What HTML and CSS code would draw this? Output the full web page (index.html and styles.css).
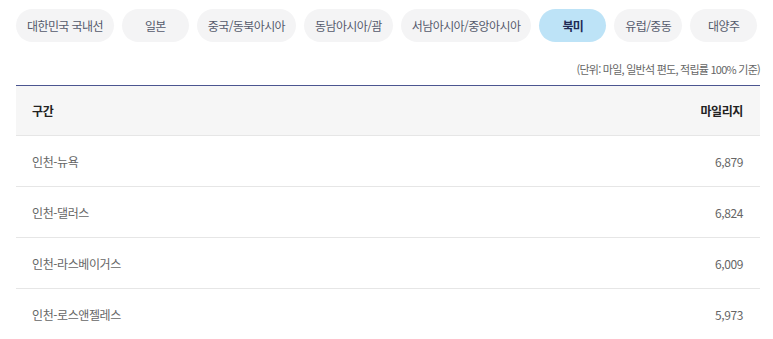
FILE: index.html
```html
<!DOCTYPE html>
<html lang="ko">
<head>
<meta charset="utf-8">
<link rel="stylesheet" href="styles.css">
</head>
<body>
<div class="page">
  <nav class="tabs">
    <button class="tab">대한민국 국내선</button>
    <button class="tab">일본</button>
    <button class="tab">중국/동북아시아</button>
    <button class="tab">동남아시아/괌</button>
    <button class="tab">서남아시아/중앙아시아</button>
    <button class="tab active">북미</button>
    <button class="tab">유럽/중동</button>
    <button class="tab">대양주</button>
  </nav>
  <p class="note">(단위: 마일, 일반석 편도, 적립률 100% 기준)</p>
  <table class="table">
    <thead>
      <tr><th class="left">구간</th><th class="right">마일리지</th></tr>
    </thead>
    <tbody>
      <tr><td class="left">인천-뉴욕</td><td class="right">6,879</td></tr>
      <tr><td class="left">인천-댈러스</td><td class="right">6,824</td></tr>
      <tr><td class="left">인천-라스베이거스</td><td class="right">6,009</td></tr>
      <tr><td class="left">인천-로스앤젤레스</td><td class="right">5,973</td></tr>
    </tbody>
  </table>
</div>
</body>
</html>
```
FILE: styles.css
```css
* { box-sizing: border-box; }
html, body { margin: 0; padding: 0; background: #fff; }
body {
  font-family: "Noto Sans CJK KR", "Noto Sans", sans-serif;
  color: #333;
}
.page {
  padding: 9px 13px 0 16px;
}
.tabs {
  display: flex;
  gap: 8px;
}
.tab {
  flex: none;
  height: 33px;
  min-width: 67px;
  padding: 0 11px;
  border: 0;
  border-radius: 17px;
  background: #f4f4f5;
  color: #555a6c;
  font-family: inherit;
  font-size: 12px;
  letter-spacing: -0.6px;
  line-height: 33px;
  text-align: center;
  white-space: nowrap;
}
.tab.active {
  background: #bde3f7;
  color: #1f2a55;
  font-weight: 700;
}
.note {
  margin: 0;
  padding-top: 18px;
  height: 43px;
  line-height: 18px;
  text-align: right;
  font-size: 11px;
  letter-spacing: -0.75px;
  color: #666;
}
.table {
  width: 744px;
  border-collapse: collapse;
  border-top: 1px solid #4b5590;
}
.table th {
  height: 50px;
  background: #f6f6f6;
  font-size: 12px;
  font-weight: 700;
  color: #222;
  letter-spacing: -0.4px;
  border-bottom: 1px solid #e6e6e6;
}
.table td {
  height: 51px;
  font-size: 12px;
  color: #666;
  letter-spacing: -0.4px;
  border-bottom: 1px solid #e6e6e6;
}
.left { text-align: left; padding-left: 16px; }
.right { text-align: right; padding-right: 17px; }
```
